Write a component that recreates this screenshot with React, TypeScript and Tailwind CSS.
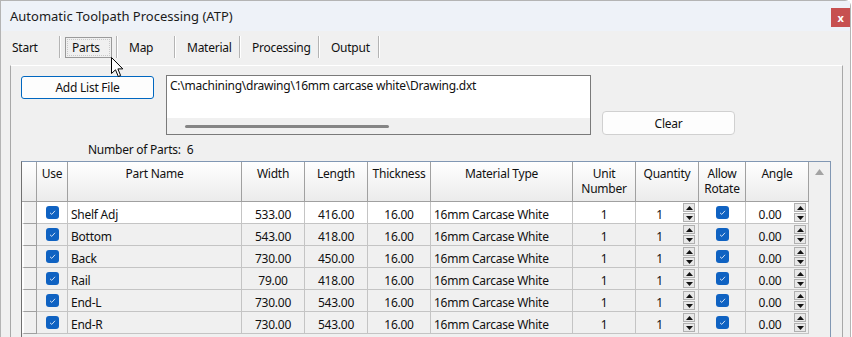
import React from 'react'

const font = { fontFamily: '"Noto Sans", "Open Sans", sans-serif' }

const parts = [
  { name: 'Shelf Adj', width: '533.00', length: '416.00' },
  { name: 'Bottom', width: '543.00', length: '418.00' },
  { name: 'Back', width: '730.00', length: '450.00' },
  { name: 'Rail', width: '79.00', length: '418.00' },
  { name: 'End-L', width: '730.00', length: '543.00' },
  { name: 'End-R', width: '730.00', length: '543.00' },
]

const headers = ['', 'Use', 'Part Name', 'Width', 'Length', 'Thickness', 'Material Type', 'Unit\nNumber', 'Quantity', 'Allow\nRotate', 'Angle']

const Check = () => (
  <div className="flex h-[13px] w-[13px] items-center justify-center rounded-[3px] bg-[#0f62c2]">
    <svg width="9" height="9" viewBox="0 0 9 9">
      <path d="M2 4.8 L3.8 6.4 L7 2.8" fill="none" stroke="#cfe0f5" strokeWidth="1" />
    </svg>
  </div>
)

const Spinner = () => (
  <div className="flex w-[12px] flex-col gap-[1px]">
    <div className="flex h-[9px] items-center justify-center border border-[#b0b0b0] bg-[#e8e8e8]">
      <svg width="7" height="4" viewBox="0 0 7 4">
        <path d="M3.5 0 L7 4 L0 4 Z" fill="#111" />
      </svg>
    </div>
    <div className="flex h-[9px] items-center justify-center border border-[#b0b0b0] bg-[#e8e8e8]">
      <svg width="7" height="4" viewBox="0 0 7 4">
        <path d="M0 0 L7 0 L3.5 4 Z" fill="#111" />
      </svg>
    </div>
  </div>
)

const Tab = ({ label, w, active }: { label: string; w: string; active?: boolean }) => (
  <div className={`flex h-[22px] items-center ${w}`}>
    {active ? (
      <div className="ml-[4px] flex h-[21px] w-[47px] items-center border border-[#9a9a9a] pl-[6px] pt-[2px] outline-1 outline-dotted outline-offset-[-3px] outline-[#c8c8c8]">
        {label}
      </div>
    ) : (
      <span className="pl-[11px] pt-[2px]">{label}</span>
    )}
  </div>
)

const Sep = () => <div className="h-[22px] w-[2px] border-l border-[#b4b4b4] border-r border-r-white" />

export default function App() {
  return (
    <div className="relative h-[337px] w-[852px] overflow-hidden bg-white text-[12px] tracking-[-0.25px] text-[#111]" style={font}>
      <div className="flex h-[337px] w-[851px] flex-col rounded-tr-[6px] border border-b-0 border-[#b4b4b4] bg-[#f0f0f0]">
        {/* title bar */}
        <div className="flex h-[30px] items-center justify-between bg-[#eef2f8] pl-[9px]">
          <span className="pt-[2px] text-[13px] tracking-normal text-[#1b1b1b]">Automatic Toolpath Processing (ATP)</span>
          <div className="mt-[3px] flex h-[19px] w-[19px] items-center justify-center bg-[#c75050] text-[11px] font-bold leading-none text-white">
            x
          </div>
        </div>

        {/* tabs */}
        <div className="mt-[5px] flex pl-[11px]">
          <div className="flex h-[22px] w-[47px] items-center pt-[2px]">Start</div>
          <Sep />
          <Tab label="Parts" w="w-[55px]" active />
          <Sep />
          <Tab label="Map" w="w-[56px]" />
          <Sep />
          <Tab label="Material" w="w-[63px]" />
          <Sep />
          <Tab label="Processing" w="w-[77px]" />
          <Sep />
          <Tab label="Output" w="w-[58px]" />
          <Sep />
        </div>

        {/* panel */}
        <div className="ml-[9px] mt-[7px] flex w-[833px] flex-1 flex-col border-l border-r border-t border-[#a8a8a8] border-t-white">
          <div className="flex pl-[10px] pt-[9px]">
            <div className="mt-[1px] flex h-[23px] w-[133px] items-center justify-center rounded-[3px] border border-[#0067c0] bg-[#fdfdfd] pt-[1px]">
              Add List File
            </div>
            <div className="ml-[12px] flex h-[60px] w-[425px] flex-col border border-[#7a7a7a] bg-white">
              <div className="flex-1 pl-[3px] pt-[1px]">C:\machining\drawing\16mm carcase white\Drawing.dxt</div>
              <div className="flex h-[16px] items-center bg-[#f0f0f0] pl-[18px]">
                <div className="h-[3px] w-[204px] rounded-full bg-[#858585]" />
              </div>
            </div>
            <div className="ml-[11px] mt-[36px] flex h-[24px] w-[133px] items-center justify-center rounded-[4px] border border-[#d0d0d0] bg-[#fdfdfd] pt-[1px]">
              Clear
            </div>
          </div>

          <div className="flex h-[26px] items-center pl-[77px] pt-[3px]">
            <span>Number of Parts:</span>
            <span className="ml-[6px]">6</span>
          </div>

          {/* grid */}
          <div className="ml-[10px] flex w-[810px] flex-1 border border-b-0 border-[#8197b3] border-l-[#707070]">
            <div className="grid grid-cols-[15px_31px_174px_63px_63px_63px_142px_63px_63px_47px_63px] auto-rows-min">
              {headers.map((h, i) => (
                <div
                  key={i}
                  className="h-[40px] whitespace-pre-line border-b border-r border-[#a0a0a0] bg-gradient-to-b from-white to-[#ebebeb] pt-[4px] text-center leading-[15px]"
                >
                  {h}
                </div>
              ))}
              {parts.map((p, r) => {
                const bg = r === 0 ? 'bg-white' : 'bg-[#f0f0f0]'
                const cell = `h-[22px] border-b border-r border-[#c4c4c4] flex items-center ${bg}`
                return (
                  <React.Fragment key={p.name}>
                    <div className="h-[22px] border-b border-r border-[#a0a0a0] border-l-2 border-l-white bg-[#f0f0f0]" />
                    <div className={`${cell} justify-center`}>
                      <Check />
                    </div>
                    <div className={`${cell} pl-[3px]`}>
                      <span className="pt-[4px]">{p.name}</span>
                    </div>
                    <div className={`${cell} justify-center`}>
                      <span className="pt-[4px]">{p.width}</span>
                    </div>
                    <div className={`${cell} justify-center`}>
                      <span className="pt-[4px]">{p.length}</span>
                    </div>
                    <div className={`${cell} justify-center`}>
                      <span className="pt-[4px]">16.00</span>
                    </div>
                    <div className={`${cell} pl-[3px]`}>
                      <span className="pt-[4px]">16mm Carcase White</span>
                    </div>
                    <div className={`${cell} justify-center`}>
                      <span className="pt-[4px]">1</span>
                    </div>
                    <div className={`${cell} pr-[3px]`}>
                      <span className="flex-1 pt-[4px] text-center">1</span>
                      <Spinner />
                    </div>
                    <div className={`${cell} justify-center`}>
                      <Check />
                    </div>
                    <div className={`${cell} pr-[2px]`}>
                      <span className="flex-1 pt-[4px] text-center">0.00</span>
                      <Spinner />
                    </div>
                  </React.Fragment>
                )
              })}
            </div>
            <div className="flex flex-1 justify-center bg-[#f0f0f0] pt-[7px]">
              <svg width="9" height="6" viewBox="0 0 9 6">
                <path d="M4.5 0 L9 6 L0 6 Z" fill="#a3a3a3" />
              </svg>
            </div>
          </div>
        </div>
      </div>

      {/* mouse pointer */}
      <svg className="absolute left-[111px] top-[57px]" width="14" height="22" viewBox="0 0 14 22">
        <path d="M0.5 0.5 L0.5 16.5 L4.5 12.8 L7.3 19.5 L9.6 18.5 L6.9 11.9 L11.8 11.9 Z" fill="#fff" stroke="#000" strokeWidth="1" />
      </svg>
    </div>
  )
}
